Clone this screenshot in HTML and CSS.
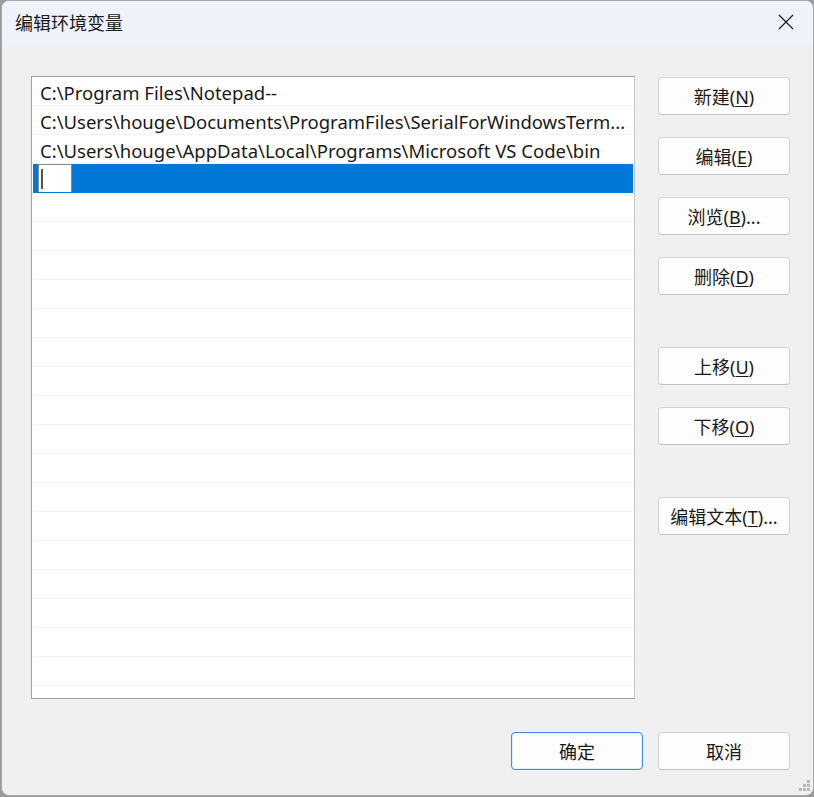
FILE: index.html
```html
<!DOCTYPE html>
<html lang="zh-CN">
<head>
<meta charset="utf-8">
<title>编辑环境变量</title>
<link rel="stylesheet" href="styles.css">
</head>
<body>
<div class="window">
  <div class="titlebar">
    <span class="title">编辑环境变量</span>
    <svg class="close" width="16" height="16" viewBox="0 0 16 16"><path d="M1 1 L15 15 M15 1 L1 15" stroke="#1a1a1a" stroke-width="1.2" fill="none"/></svg>
  </div>
  <div class="content">
    <div class="main">
      <div class="list">
        <div class="row">C:\Program Files\Notepad--</div>
        <div class="row">C:\Users\houge\Documents\ProgramFiles\SerialForWindowsTerm...</div>
        <div class="row">C:\Users\houge\AppData\Local\Programs\Microsoft VS Code\bin</div>
        <div class="row selected"><span class="edit"><span class="caret"></span></span></div>
        <div class="row"></div><div class="row"></div><div class="row"></div><div class="row"></div>
        <div class="row"></div><div class="row"></div><div class="row"></div><div class="row"></div>
        <div class="row"></div><div class="row"></div><div class="row"></div><div class="row"></div>
        <div class="row"></div><div class="row"></div><div class="row"></div><div class="row"></div>
        <div class="row"></div><div class="row"></div>
      </div>
      <div class="side">
        <div class="group">
          <button class="btn">新建(<u>N</u>)</button>
          <button class="btn">编辑(<u>E</u>)</button>
          <button class="btn">浏览(<u>B</u>)...</button>
          <button class="btn">删除(<u>D</u>)</button>
        </div>
        <div class="group">
          <button class="btn">上移(<u>U</u>)</button>
          <button class="btn">下移(<u>O</u>)</button>
        </div>
        <div class="group">
          <button class="btn">编辑文本(<u>T</u>)...</button>
        </div>
      </div>
    </div>
    <div class="footer">
      <button class="btn primary">确定</button>
      <button class="btn">取消</button>
    </div>
  </div>
  <div class="grip">
    <span></span><span></span><span></span><span></span><span></span><span></span>
  </div>
</div>
</body>
</html>
```

FILE: styles.css
```css
* { box-sizing: border-box; }
html, body { margin: 0; padding: 0; }
body {
  width: 814px;
  height: 797px;
  background: #9a9a9a;
  font-family: "Noto Sans", "Noto Sans CJK SC", sans-serif;
  overflow: hidden;
}
.window {
  position: relative;
  width: 813px;
  height: 796px;
  margin-left: 1px;
  background: #f0f0f0;
  border: 1px solid #a8a8a8;
  border-radius: 8px;
  overflow: hidden;
  display: flex;
  flex-direction: column;
}
.titlebar {
  height: 44px;
  flex: none;
  background: #eff3f9;
  display: flex;
  align-items: center;
  justify-content: space-between;
  padding: 0 19px 2px 13px;
}
.title {
  font-family: "Noto Sans CJK SC", sans-serif;
  font-size: 18px;
  color: #1a1a1a;
}
.close { display: block; }
.content {
  flex: 1;
  display: flex;
  flex-direction: column;
  padding: 31px 23px 0 29px;
}
.main {
  display: flex;
  gap: 23px;
}
.list {
  width: 605px;
  height: 623px;
  background: #ffffff;
  border: 1px solid #a0a0a8;
  border-right-color: #c8c8cc;
  overflow: hidden;
  padding: 0 1px;
}
.row {
  height: 29px;
  border-bottom: 1px solid #f2f2f2;
  font-size: 18.5px;
  line-height: 28px;
  padding-top: 2px;
  color: #1a1a1a;
  padding-left: 7px;
  white-space: nowrap;
  overflow: hidden;
}
.row.selected {
  background: #0078d7;
  border-bottom-color: #0078d7;
  padding-left: 5px;
  padding-top: 0;
  display: flex;
  align-items: stretch;
}
.edit {
  width: 34px;
  height: 29px;
  background: #ffffff;
  border: 1px solid #8a8a8a;
  position: relative;
}
.caret {
  position: absolute;
  left: 2px;
  top: 4px;
  width: 2px;
  height: 20px;
  background: #555;
}
.side {
  display: flex;
  flex-direction: column;
  gap: 52px;
  padding-top: 1px;
}
.group {
  display: flex;
  flex-direction: column;
  gap: 22px;
}
.btn {
  width: 132px;
  height: 38px;
  background: #fdfdfd;
  border: 1px solid #d4d4d4;
  border-bottom-color: #c4c4c4;
  border-radius: 4px;
  font-family: "Noto Sans", "Noto Sans CJK SC", sans-serif;
  font-size: 18px;
  color: #1a1a1a;
  padding: 0;
}
.btn u { text-underline-offset: 2px; }
.btn.primary {
  border: 1px solid #3a8ee6;
  box-shadow: inset 0 0 0 1px #e0eefb;
}
.footer {
  display: flex;
  justify-content: flex-end;
  gap: 15px;
  margin-top: 33px;
}
.grip {
  position: absolute;
  right: 3px;
  bottom: 3px;
  width: 12px;
  height: 12px;
  display: grid;
  grid-template-columns: repeat(3, 3px);
  grid-template-rows: repeat(3, 3px);
  gap: 1px;
  justify-content: end;
}
.grip span { background: #b8b8b8; }
.grip span:nth-child(1) { grid-column: 3; grid-row: 1; }
.grip span:nth-child(2) { grid-column: 2; grid-row: 2; }
.grip span:nth-child(3) { grid-column: 3; grid-row: 2; }
.grip span:nth-child(4) { grid-column: 1; grid-row: 3; }
.grip span:nth-child(5) { grid-column: 2; grid-row: 3; }
.grip span:nth-child(6) { grid-column: 3; grid-row: 3; }
```
